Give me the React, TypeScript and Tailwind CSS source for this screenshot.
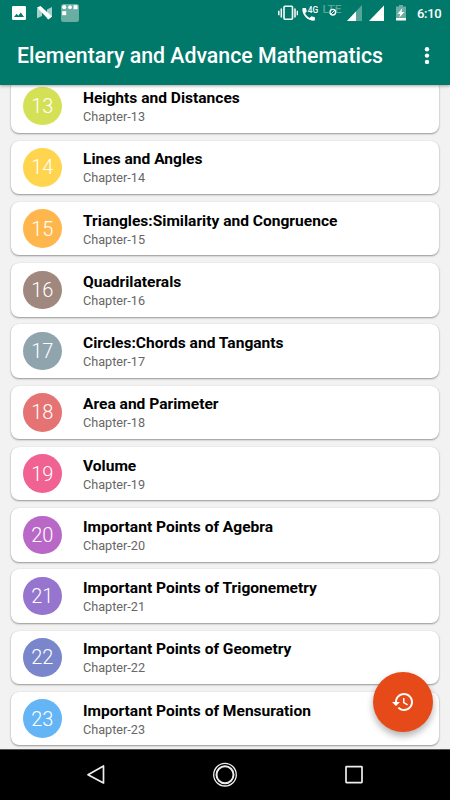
const chapters = [
  { n: 13, title: "Heights and Distances", color: "bg-[#d4e157]" },
  { n: 14, title: "Lines and Angles", color: "bg-[#ffd54f]" },
  { n: 15, title: "Triangles:Similarity and Congruence", color: "bg-[#ffb74d]" },
  { n: 16, title: "Quadrilaterals", color: "bg-[#a1887f]" },
  { n: 17, title: "Circles:Chords and Tangants", color: "bg-[#90a4ae]" },
  { n: 18, title: "Area and Parimeter", color: "bg-[#e57373]" },
  { n: 19, title: "Volume", color: "bg-[#f06292]" },
  { n: 20, title: "Important Points of Agebra", color: "bg-[#ba68c8]" },
  { n: 21, title: "Important Points of Trigonemetry", color: "bg-[#9575cd]" },
  { n: 22, title: "Important Points of Geometry", color: "bg-[#7986cb]" },
  { n: 23, title: "Important Points of Mensuration", color: "bg-[#64b5f6]" },
];

function StatusBar() {
  return (
    <div className="flex h-[27px] items-start text-white">
      <svg className="ml-3 mt-1.5 h-[14px] w-[14px]" viewBox="0 0 14 14">
        <path fill="currentColor" fillRule="evenodd" d="M1.2 0h11.6A1.2 1.2 0 0 1 14 1.2v11.6a1.2 1.2 0 0 1-1.2 1.2H1.2A1.2 1.2 0 0 1 0 12.800V1.200A1.200 1.200 0 0 1 1.200 0ZM2 11h10L8.800 6.600 6.300 9.800 4.700 7.800Z" />
      </svg>
      <svg className="ml-[11px] mt-1.5 h-[14px] w-[15px]" viewBox="0 0 15 14">
        <path fill="#a7d0ca" d="M0 2.500 5 1v9L0 12.200ZM10 3.500l5-2.500v9.700L10 13Z" />
        <path fill="white" d="M0 1.500 3.500 0 15 10.600 11.500 13.500Z" />
      </svg>
      <svg className="ml-[9px] mt-1 h-[18px] w-[18px]" viewBox="0 0 18 18">
        <rect width="18" height="18" rx="2.500" fill="#69ada3" />
        <circle cx="3.200" cy="3.200" r="2.100" fill="white" />
        <circle cx="9" cy="3.200" r="1.900" fill="white" />
        <rect x="12.500" y="1.200" width="4" height="4" fill="white" />
        <rect x="1.200" y="7.200" width="4" height="4" fill="white" />
      </svg>
      <svg className="ml-auto mt-[5px] h-4 w-5" viewBox="0 0 20 16">
        <rect x="6" y="1.300" width="8.500" height="13" rx="1" fill="none" stroke="white" strokeWidth="1.600" />
        <path stroke="white" strokeWidth="1.500" d="M3.300 3.500v9M.8 5.700v4.600M17 3.500v9M19.400 5.700v4.600" />
      </svg>
      <svg className="ml-[4px] mt-0.5 h-5 w-[18px] overflow-visible" viewBox="0 0 18 20">
        <path fill="white" d="M1.200 6h2.700l.9 3.500-1.700 1.800c1 2 2.600 3.700 4.600 4.700l1.800-1.700 3.400.9v2.600c0 .5-.4.900-.9.900C5.600 18.700.3 13.400.3 6.900c0-.5.400-.9.900-.9Z" />
        <text x="5.800" y="10.500" fontSize="9.500" fontFamily="Roboto, sans-serif" fontWeight="500" fill="white" textLength="10.500" lengthAdjust="spacingAndGlyphs">4G</text>
      </svg>
      <svg className="ml-[3px] mt-0 h-[20px] w-5 overflow-visible" viewBox="0 0 20 20">
        <text x="-.5" y="13" fontSize="11.500" fontFamily="Roboto, sans-serif" fontWeight="500" fill="#57a498" textLength="19" lengthAdjust="spacingAndGlyphs">LTE</text>
        <circle cx="9.800" cy="12.200" r="2.800" fill="#00796b" stroke="white" strokeWidth="1.300" />
        <path d="m7.800 14.200 4-4" stroke="white" />
      </svg>
      <svg className="ml-[4px] mt-[5px] h-4 w-[15px]" viewBox="0 0 15 16">
        <path fill="#57a498" d="M15 0v16H0Z" />
        <path fill="white" d="M9 6.500V16H0Z" />
      </svg>
      <svg className="ml-[7px] mt-[5px] h-4 w-[15px]" viewBox="0 0 15 16">
        <path fill="white" d="M15 .5V16H0Z" />
      </svg>
      <svg className="ml-[12px] mt-[5px] h-4 w-[10px]" viewBox="0 0 10 16">
        <path fill="#69ada3" d="M3 0h4v1.500h3V14H0V1.500h3Z" />
        <path fill="white" d="M0 13h10v2.500H0ZM6.300 3 1.500 9h2.700L3.300 12.600 8.500 6.900H5.600Z" />
      </svg>
      <span className="ml-[11px] mr-[9px] mt-[5px] w-6 whitespace-nowrap text-[13px] font-medium leading-[17px] tracking-[-.3px]">6:10</span>
    </div>
  );
}

export default function App() {
  return (
    <div className="relative flex h-[800px] w-[450px] flex-col overflow-hidden bg-[#f2f2f2] font-['Roboto',sans-serif]">
      <header className="z-10 flex h-[85px] shrink-0 flex-col bg-[#00796b] shadow-[0_1px_3px_rgba(0,0,0,.35)]">
        <StatusBar />
        <div className="flex h-[58px] items-center justify-between pl-[17px] pr-[20.500px]">
          <h1 className="whitespace-nowrap text-[21.300px] font-medium leading-7 text-white">Elementary and Advance Mathematics</h1>
          <svg className="h-[18px] w-1.5" viewBox="0 0 6 18" fill="white">
            <circle cx="3" cy="2.300" r="2.200" />
            <circle cx="3" cy="8.600" r="2.200" />
            <circle cx="3" cy="14.900" r="2.200" />
          </svg>
        </div>
      </header>
      <main className="min-h-0 flex-1 overflow-hidden">
        <div className="-mt-[5.750px] flex flex-col gap-[7.750px] px-[11px]">
          {chapters.map((c) => (
            <div key={c.n} className="flex h-[53.500px] shrink-0 items-center rounded-lg bg-white pl-3 shadow-[0_1px_2px_rgba(0,0,0,.38),0_0_1px_rgba(0,0,0,.12)]">
              <div className={`flex h-[38.500px] w-[38.500px] items-center justify-center rounded-full text-[20px] font-light text-white ${c.color}`}>
                {c.n}
              </div>
              <div className="ml-[21.500px] whitespace-nowrap pt-[1px]">
                <div className="text-[15.550px] font-bold leading-5 text-black">{c.title}</div>
                <div className="text-[12.650px] leading-[17px] text-[#666]">Chapter-{c.n}</div>
              </div>
            </div>
          ))}
        </div>
      </main>
      <nav className="h-[51px] shrink-0 border-t border-[#555] bg-black">
        <svg className="h-[50px] w-[450px]" viewBox="0 0 450 50" fill="none" stroke="#eee">
          <path d="M103.500 16v17L88 24.700Z" strokeWidth="1.700" strokeLinejoin="round" />
          <circle cx="225" cy="24.700" r="11.300" strokeWidth="1.300" />
          <circle cx="225" cy="24.700" r="8.500" strokeWidth="2" />
          <rect x="346" y="16.600" width="16" height="16" rx=".5" strokeWidth="1.700" />
        </svg>
      </nav>
      <button className="absolute left-[373px] top-[672px] z-20 flex h-[60px] w-[60px] items-center justify-center rounded-full bg-[#e64a19] shadow-[0_4px_7px_rgba(0,0,0,.3)]">
        <svg className="h-6 w-6" viewBox="0 0 24 24" fill="white">
          <path d="M13 3c-4.970 0-9 4.030-9 9H1l3.890 3.890.070.140L9 12H6c0-3.870 3.130-7 7-7s7 3.130 7 7-3.130 7-7 7c-1.930 0-3.680-.790-4.940-2.060l-1.420 1.420C8.270 19.990 10.510 21 13 21c4.970 0 9-4.030 9-9s-4.030-9-9-9zm-1 5v5l4.280 2.540.720-1.210-3.500-2.080V8H12z" />
        </svg>
      </button>
    </div>
  );
}
